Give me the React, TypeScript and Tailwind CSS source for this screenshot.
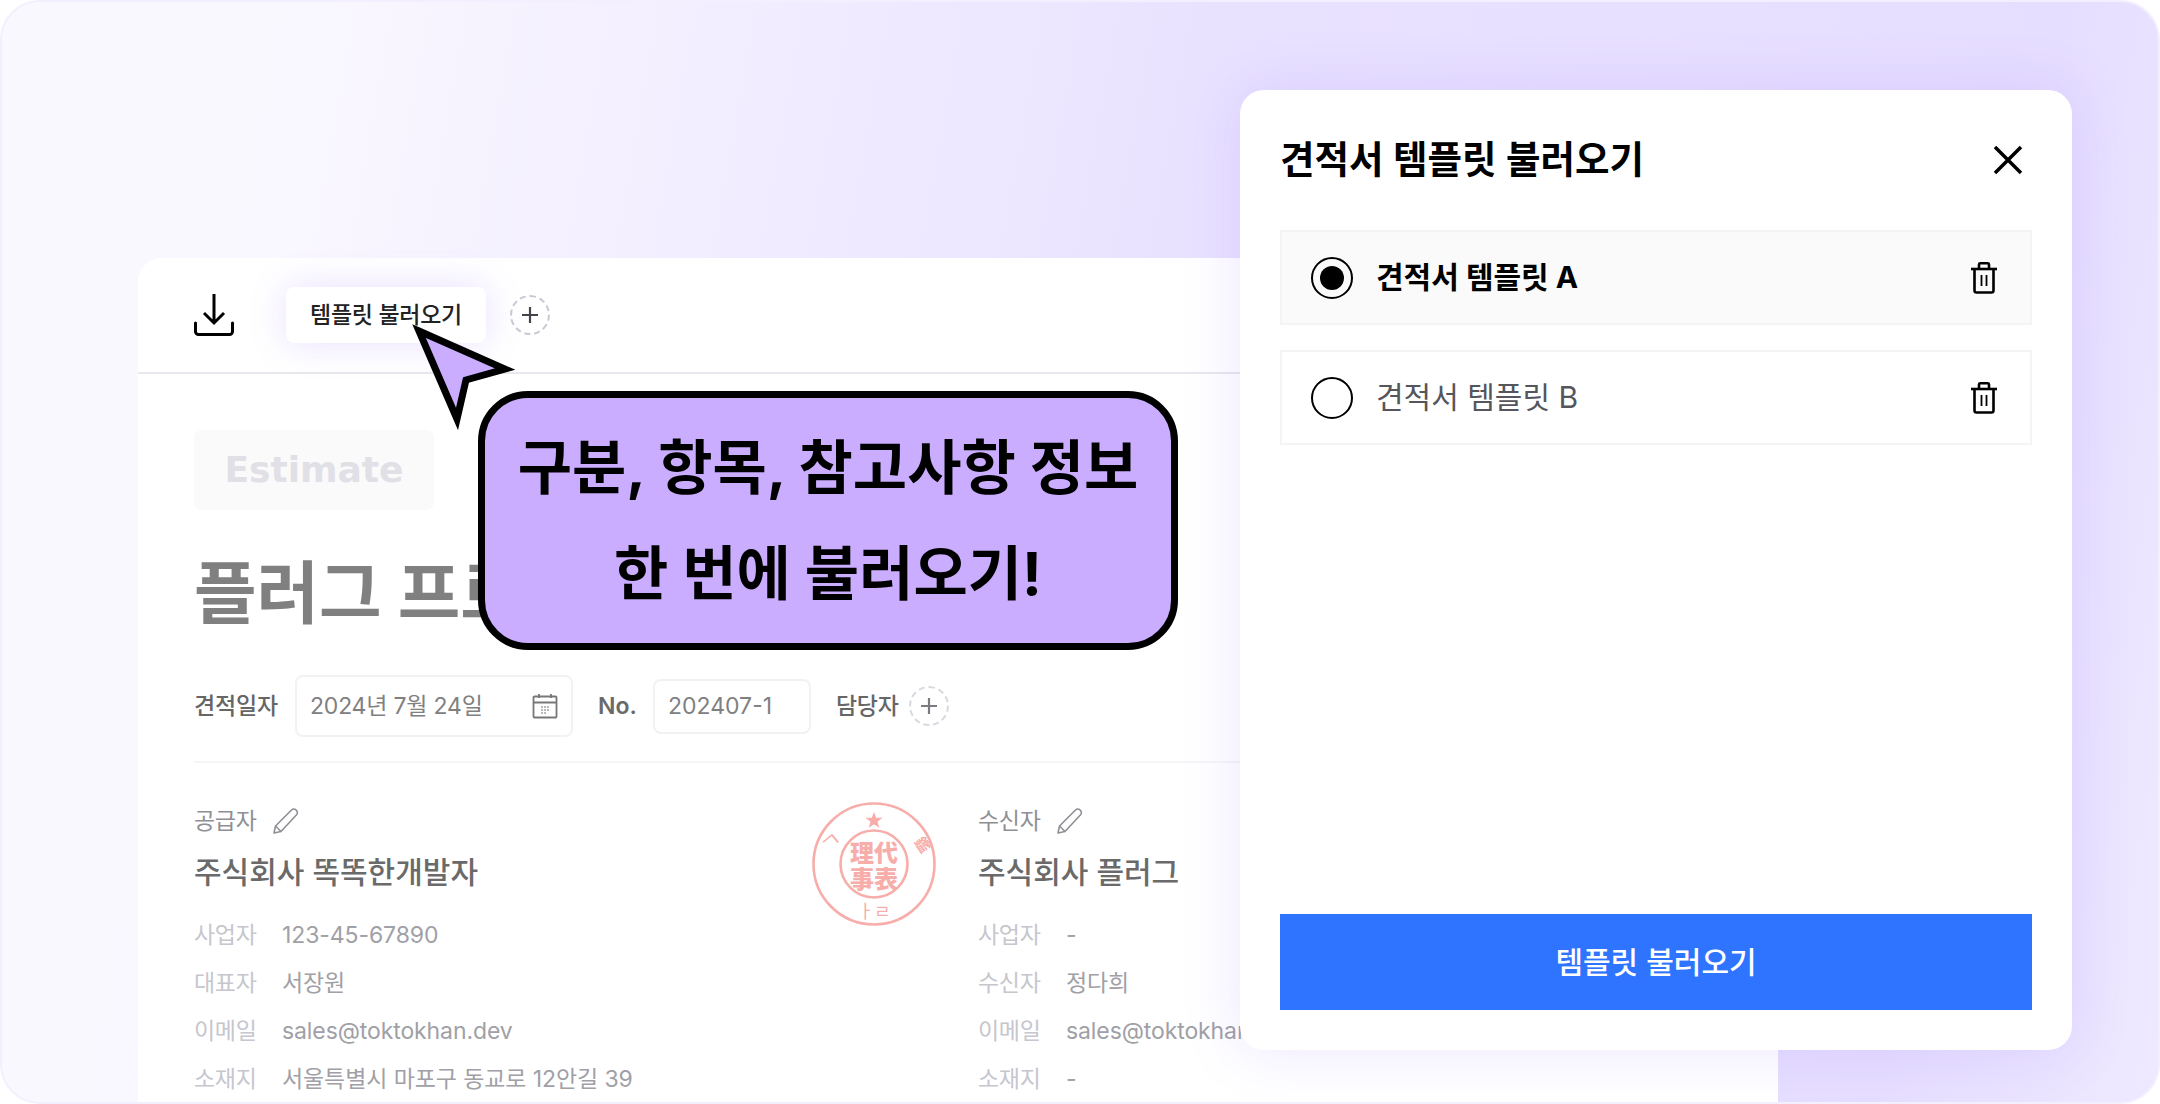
import React from 'react';

const infoColumns = [
  {
    label: '공급자',
    company: '주식회사 똑똑한개발자',
    rows: [
      ['사업자', '123-45-67890'],
      ['대표자', '서장원'],
      ['이메일', 'sales@toktokhan.dev'],
      ['소재지', '서울특별시 마포구 동교로 12안길 39'],
    ],
  },
  {
    label: '수신자',
    company: '주식회사 플러그',
    rows: [
      ['사업자', '-'],
      ['수신자', '정다희'],
      ['이메일', 'sales@toktokhan.dev'],
      ['소재지', '-'],
    ],
  },
];

const PlusCircle = () => (
  <div className="flex h-10 w-10 shrink-0 items-center justify-center rounded-full border-2 border-dashed border-[#c9c9d4]">
    <svg width="16" height="16" viewBox="0 0 16 16" fill="none" stroke="#44444c" strokeWidth="2.200">
      <path d="M8 0v16M0 8h16" />
    </svg>
  </div>
);

const PencilIcon = () => (
  <svg width="28" height="28" viewBox="0 0 28 28" fill="none" stroke="#8f8f96" strokeWidth="1.600" strokeLinejoin="round">
    <path d="M2 26l1.500-7L19.500 3a3 3 0 0 1 4.500 0 3.200 3.200 0 0 1 .8 4.500L9 24.500z" />
    <path d="M3.500 19L9 24.500" />
  </svg>
);

const TrashIcon = () => (
  <svg width="26" height="32" viewBox="0 0 26 32" fill="none" stroke="#000" strokeWidth="2.600">
    <path d="M0 7h26" />
    <path d="M8 7V2.500A1.300 1.300 0 0 1 9.300 1.300h7.400A1.300 1.300 0 0 1 18 2.500V7" />
    <path d="M3.500 7v21.500a2 2 0 0 0 2 2h15a2 2 0 0 0 2-2V7" />
    <path d="M10.500 13v11M15.500 13v11" strokeWidth="1.800" />
  </svg>
);

const stampFont = "'Noto Sans CJK KR', sans-serif";

const Stamp = () => (
  <svg width="124" height="124" viewBox="0 0 124 124" fill="none" className="absolute left-[674px] top-[544px] opacity-45">
    <circle cx="62" cy="62" r="60.500" stroke="#ee4b45" strokeWidth="2.600" />
    <circle cx="62" cy="62" r="33.500" stroke="#ee4b45" strokeWidth="2.600" />
    <path d="M62 10l2.200 5.800h6.300l-5 3.900 1.800 6.100-5.300-3.600-5.300 3.600 1.800-6.100-5-3.900h6.300z" fill="#ee4b45" />
    <text x="50" y="60" textAnchor="middle" fontSize="24" fontWeight="900" fill="#ee4b45" fontFamily={stampFont}>理</text>
    <text x="74" y="60" textAnchor="middle" fontSize="24" fontWeight="900" fill="#ee4b45" fontFamily={stampFont}>代</text>
    <text x="50" y="86" textAnchor="middle" fontSize="24" fontWeight="900" fill="#ee4b45" fontFamily={stampFont}>事</text>
    <text x="74" y="86" textAnchor="middle" fontSize="24" fontWeight="900" fill="#ee4b45" fontFamily={stampFont}>表</text>
    <text x="0" y="0" textAnchor="middle" fontSize="22" fill="#ee4b45" transform="translate(24 46) rotate(-40)" fontFamily={stampFont}>ㄱ</text>
    <text x="0" y="0" textAnchor="middle" fontSize="15" fontWeight="700" fill="#ee4b45" transform="translate(106 46) rotate(55)" fontFamily={stampFont}>鑑</text>
    <text x="62" y="116" textAnchor="middle" fontSize="18" fill="#ee4b45" fontFamily={stampFont}>ㅏㄹ</text>
  </svg>
);

export default function App() {
  return (
    <div className="relative h-[1104px] w-[2160px] overflow-hidden bg-white font-['Inter','Noto_Sans_CJK_KR',sans-serif]">
      <div className="relative h-full w-full overflow-hidden rounded-[40px] border-2 border-[#f3effe] bg-[linear-gradient(100deg,#faf8ff_12%,#e9e2ff_52%,#e6deff_88%,#eee9ff_100%)] pl-[136px] pt-[256px]">
        {/* Document */}
        <div className="relative h-[900px] w-[1640px] rounded-t-[24px] bg-white">
          <div className="flex h-[116px] items-center border-b-2 border-[#e8e8ee] pl-[56px]">
            <svg width="40" height="42" viewBox="0 0 40 42" fill="none" stroke="#000" strokeWidth="3">
              <path d="M20 0v29M10 19l10 10 10-10" />
              <path d="M1.500 29v8.500a3 3 0 0 0 3 3h31a3 3 0 0 0 3-3V29" strokeLinecap="round" />
            </svg>
            <div className="ml-[52px] flex h-[56px] w-[200px] items-center justify-center rounded-lg bg-white text-[23px] font-medium tracking-[-0.3px] text-[#222] shadow-[0_0_36px_rgba(150,110,255,0.22)]">
              템플릿 불러오기
            </div>
            <div className="ml-6">
              <PlusCircle />
            </div>
          </div>

          <div className="pl-[56px] pt-[56px]">
            <div className="flex h-[80px] w-[240px] items-center justify-center rounded-lg bg-[#fafafa] font-['DejaVu_Sans',sans-serif] text-[36px] font-bold text-[#e0e0e6]">
              Estimate
            </div>
            <h1 className="mt-[41px] text-[68px] font-bold leading-[84px] text-[#808080]">플러그 프로젝트</h1>

            <div className="mt-[40px] flex items-center">
              <span className="w-[84px] text-[23px] font-medium tracking-[-0.2px] text-[#666]">견적일자</span>
              <div className="ml-[17px] flex h-[62px] w-[278px] items-center justify-between rounded-lg border-2 border-[#f2f2f4] pl-[13px] pr-[13px] text-[23px] tracking-[-0.2px] text-[#808080]">
                2024년 7월 24일
                <svg width="26" height="26" viewBox="0 0 26 26" fill="none" stroke="#777" strokeWidth="1.800">
                  <rect x="1.500" y="3.500" width="23" height="21" rx="1" />
                  <path d="M1.500 9.500h23M7 1v4M19 1v4" />
                  <path d="M9 14h2M12 14h2M15 14h2M9 17h2M12 17h2M15 17h2M9 20h2M12 20h2" strokeWidth="1.200" />
                </svg>
              </div>
              <span className="ml-[25px] w-[37px] text-[23px] font-semibold text-[#6a6a6a]">No.</span>
              <div className="ml-[18px] flex h-[55px] w-[158px] items-center rounded-lg border-2 border-[#f2f2f4] pl-[13px] text-[23px] text-[#808080]">
                202407-1
              </div>
              <span className="ml-[25px] w-[62px] whitespace-nowrap text-[23px] font-medium tracking-[-0.3px] text-[#666]">담당자</span>
              <div className="ml-[11px] opacity-70">
                <PlusCircle />
              </div>
            </div>

            <div className="mt-[24px] h-0.5 bg-[#f6f6f8]" />

            <div className="mt-[39px] grid grid-cols-[784px_1fr]">
              {infoColumns.map((col) => (
                <div key={col.label} className="overflow-hidden">
                  <div className="flex h-[38px] items-center gap-[15px] text-[23px] tracking-[-0.3px] text-[#8f8f96]">
                    {col.label}
                    <PencilIcon />
                  </div>
                  <div className="mt-[12px] text-[30px] font-medium leading-[40px] text-[#6a6a6a]">{col.company}</div>
                  <div className="mt-[19px] flex flex-col">
                    {col.rows.map(([key, value]) => (
                      <div key={key} className="flex h-[48px] items-center whitespace-nowrap text-[23px] tracking-[-0.1px]">
                        <span className="w-[88px] tracking-[-0.3px] text-[#c6c6ce]">{key}</span>
                        <span className="text-[#a0a0a6]">{value}</span>
                      </div>
                    ))}
                  </div>
                </div>
              ))}
            </div>
          </div>

          <Stamp />
        </div>

        {/* Callout with pointer */}
        <svg width="120" height="120" viewBox="0 0 120 120" className="absolute left-[405px] top-[318px]" fill="#caadff" stroke="#000" strokeWidth="7" strokeMiterlimit="10">
          <path d="M12 11L98 49L59 60L50 99Z" />
        </svg>
        <div className="absolute left-[476px] top-[389px] flex h-[259px] w-[700px] flex-col items-center justify-center rounded-[50px] border-[7px] border-black bg-[#caadff] text-[59px] font-bold leading-[106px] text-black">
          <div>구분, 항목, 참고사항 정보</div>
          <div>한 번에 불러오기!</div>
        </div>

        {/* Template modal */}
        <div className="absolute left-[1238px] top-[88px] flex h-[960px] w-[832px] flex-col rounded-[24px] bg-white px-[40px] pb-[40px] shadow-[0_0_60px_rgba(130,90,255,0.15)]">
          <div className="flex h-[140px] items-center justify-between">
            <h2 className="text-[37.500px] font-semibold text-black">견적서 템플릿 불러오기</h2>
            <svg width="30" height="30" viewBox="0 0 30 30" fill="none" stroke="#000" strokeWidth="3.500" className="mr-[9px]">
              <path d="M2 2l26 26M28 2L2 28" />
            </svg>
          </div>
          <div className="flex h-[95px] items-center justify-between border-2 border-[#f4f4f5] bg-[#fafafa] pl-[29px] pr-[33px]">
            <div className="flex items-center gap-[23px]">
              <div className="flex h-[42px] w-[42px] items-center justify-center rounded-full border-2 border-black">
                <div className="h-[24px] w-[24px] rounded-full bg-black" />
              </div>
              <span className="text-[30px] font-bold text-black">견적서 템플릿 A</span>
            </div>
            <TrashIcon />
          </div>
          <div className="mt-[25px] flex h-[95px] items-center justify-between border-2 border-[#f4f4f5] pl-[29px] pr-[33px]">
            <div className="flex items-center gap-[23px]">
              <div className="h-[42px] w-[42px] rounded-full border-2 border-black" />
              <span className="text-[30px] text-[#55555c]">견적서 템플릿 B</span>
            </div>
            <TrashIcon />
          </div>
          <button className="mt-auto flex h-[96px] w-full items-center justify-center bg-[#2e74ff] text-[30px] font-medium text-white">
            템플릿 불러오기
          </button>
        </div>
      </div>
    </div>
  );
}
